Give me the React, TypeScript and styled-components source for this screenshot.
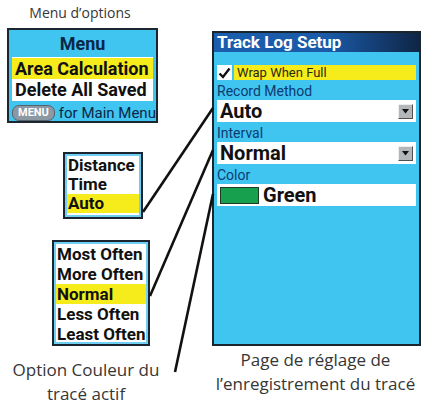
import React from "react";
import styled, { createGlobalStyle } from "styled-components";

const GlobalStyle = createGlobalStyle`
  html, body {
    margin: 0;
    padding: 0;
    background: #fff;
  }
`;

// narrow face for the handheld's screen text
const gpsFont = `Roboto, "Liberation Sans", sans-serif`;

const Figure = styled.div`
  position: relative;
  width: 426px;
  height: 406px;
  display: grid;
  grid-template-columns: 205px 1fr;
  overflow: hidden;
  background: #fff;
`;

const Column = styled.div`
  display: flex;
  flex-direction: column;
  align-items: flex-start;
`;

const Caption = styled.div<{ $width: number; $top: number; $left?: number; $size: number }>`
  width: ${(p) => p.$width}px;
  margin-top: ${(p) => p.$top}px;
  margin-left: ${(p) => p.$left ?? 0}px;
  font-family: "Open Sans", "Noto Sans", sans-serif;
  font-size: ${(p) => p.$size}px;
  line-height: 24px;
  color: #363636;
  text-align: center;
  white-space: nowrap;
`;

/* options menu popup */
const MenuBox = styled.div`
  box-sizing: border-box;
  margin: 3px 0 0 7px;
  width: 151px;
  height: 95px;
  border: 2px solid #1c2630;
  background: #40c4f0;
  display: flex;
  flex-direction: column;
  font-family: ${gpsFont};
  font-weight: bold;
`;

const MenuTitle = styled.div`
  height: 28px;
  line-height: 27px;
  text-align: center;
  font-size: 18px;
  color: #0b2747;
`;

const MenuList = styled.div`
  margin: 0 3px;
  background: #fff;
  padding: 1px 0;
`;

const MenuItem = styled.div<{ $active?: boolean }>`
  height: 21px;
  line-height: 21px;
  padding-left: 3px;
  font-size: 18px;
  color: #111;
  background: ${(p) => (p.$active ? "#f6ec1c" : "transparent")};
  white-space: nowrap;
`;

const MenuHint = styled.div`
  display: flex;
  align-items: center;
  gap: 4px;
  padding: 3px 3px 0;
  white-space: nowrap;
`;

const MenuKey = styled.span`
  padding: 0 5px;
  height: 14px;
  line-height: 14px;
  border-radius: 7px;
  border: 1px solid #56626b;
  background: #8c99a3;
  color: #fff;
  font-size: 11px;
`;

const HintText = styled.span`
  font-size: 15px;
  font-weight: normal;
  color: #0b2747;
`;

/* pick lists shown beside the setup page */
const PickList = styled.div<{ $left: number; $top: number; $width: number; $height: number }>`
  box-sizing: border-box;
  margin-left: ${(p) => p.$left}px;
  margin-top: ${(p) => p.$top}px;
  width: ${(p) => p.$width}px;
  height: ${(p) => p.$height}px;
  border: 2px solid #1b2530;
  padding: 2px;
  background: #fff;
  box-shadow: inset 0 0 0 2px #6fcff2;
  font-family: ${gpsFont};
  font-weight: bold;
`;

const PickItem = styled.div<{ $active?: boolean; $row: number }>`
  height: ${(p) => p.$row}px;
  line-height: ${(p) => p.$row}px;
  padding-left: 1px;
  font-size: 17px;
  color: #111;
  background: ${(p) => (p.$active ? "#f6ec1c" : "transparent")};
  white-space: nowrap;
`;

/* Track Log Setup page */
const Panel = styled.div`
  box-sizing: border-box;
  margin-left: 7px;
  margin-top: 31px;
  width: 209px;
  height: 315px;
  border: 2px solid #1b252e;
  background: #40c4f0;
  font-family: ${gpsFont};
`;

const TitleBar = styled.div`
  height: 19px;
  line-height: 19px;
  padding-left: 3px;
  background: linear-gradient(to right, #1a5eae 0%, #1a5aa8 55%, #0f2646 100%);
  color: #fff;
  font-size: 17px;
  font-weight: bold;
`;

const PanelBody = styled.div`
  display: flex;
  flex-direction: column;
  padding: 13px 3px 0;
`;

const CheckRow = styled.div`
  display: flex;
  height: 15px;
  gap: 2px;
`;

const CheckBox = styled.div`
  width: 15px;
  height: 15px;
  background: #fff;
  display: flex;
  align-items: center;
  justify-content: center;
`;

const CheckLabel = styled.div`
  flex: 1;
  background: #f6ec1c;
  padding-left: 3px;
  font-size: 13px;
  line-height: 15px;
  color: #2a2a10;
`;

const FieldLabel = styled.div`
  height: 17px;
  margin-top: 3px;
  line-height: 17px;
  font-size: 14px;
  color: #0d3b70;
`;

const Field = styled.div`
  height: 22px;
  background: #fff;
  display: flex;
  align-items: center;
  padding: 0 3px;
  font-size: 20px;
  font-weight: bold;
  color: #111;
`;

const DropButton = styled.div`
  box-sizing: border-box;
  margin-left: auto;
  width: 15px;
  height: 15px;
  background: #b4b7ba;
  border: 1px solid;
  border-color: #eee #505050 #505050 #eee;
  display: flex;
  align-items: center;
  justify-content: center;
`;

const Swatch = styled.div`
  box-sizing: border-box;
  width: 39px;
  height: 17px;
  margin-right: 4px;
  background: #17a04e;
  border: 1px solid #1d3b25;
`;

const Leaders = styled.svg`
  position: absolute;
  inset: 0;
  pointer-events: none;
`;

const Arrow = () => (
  <svg width="7" height="5" viewBox="0 0 7 5">
    <path d="M0 0 H7 L3.5 4.5 Z" fill="#111" />
  </svg>
);

const App = () => {
  return (
    <>
      <GlobalStyle />
      <Figure>
        <Column>
          <Caption $width={160} $top={1} $size={14}>
            Menu d’options
          </Caption>
          <MenuBox>
            <MenuTitle>Menu</MenuTitle>
            <MenuList>
              <MenuItem $active>Area Calculation</MenuItem>
              <MenuItem>Delete All Saved</MenuItem>
            </MenuList>
            <MenuHint>
              <MenuKey>MENU</MenuKey>
              <HintText>for Main Menu</HintText>
            </MenuHint>
          </MenuBox>

          <PickList $left={63} $top={29} $width={80} $height={67}>
            <PickItem $row={19}>Distance</PickItem>
            <PickItem $row={19}>Time</PickItem>
            <PickItem $row={19} $active>Auto</PickItem>
          </PickList>

          <PickList $left={52} $top={21} $width={98} $height={106}>
            <PickItem $row={20}>Most Often</PickItem>
            <PickItem $row={20}>More Often</PickItem>
            <PickItem $row={20} $active>Normal</PickItem>
            <PickItem $row={20}>Less Often</PickItem>
            <PickItem $row={20}>Least Often</PickItem>
          </PickList>

          <Caption $width={172} $top={12} $size={17}>
            Option Couleur du
            <br />
            tracé actif
          </Caption>
        </Column>

        <Column>
          <Panel>
            <TitleBar>Track Log Setup</TitleBar>
            <PanelBody>
              <CheckRow>
                <CheckBox>
                  <svg width="13" height="12" viewBox="0 0 13 12">
                    <path d="M1.5 6.5 L5 10 L11.5 1.5" fill="none" stroke="#111" strokeWidth="2.4" />
                  </svg>
                </CheckBox>
                <CheckLabel>Wrap When Full</CheckLabel>
              </CheckRow>
              <FieldLabel>Record Method</FieldLabel>
              <Field>
                Auto
                <DropButton>
                  <Arrow />
                </DropButton>
              </Field>
              <FieldLabel>Interval</FieldLabel>
              <Field>
                Normal
                <DropButton>
                  <Arrow />
                </DropButton>
              </Field>
              <FieldLabel>Color</FieldLabel>
              <Field>
                <Swatch />
                Green
              </Field>
            </PanelBody>
          </Panel>
          <Caption $width={215} $top={2} $left={3} $size={17}>
            Page de réglage de
            <br />
            l’enregistrement du tracé
          </Caption>
        </Column>

        <Leaders width="426" height="406" viewBox="0 0 426 406">
          <g stroke="#111" strokeWidth="2.6" fill="none">
            <line x1="143" y1="212" x2="213" y2="108" />
            <line x1="150" y1="296" x2="213" y2="150" />
            <line x1="175" y1="372" x2="213" y2="194" />
          </g>
        </Leaders>
      </Figure>
    </>
  );
};

export default App;
